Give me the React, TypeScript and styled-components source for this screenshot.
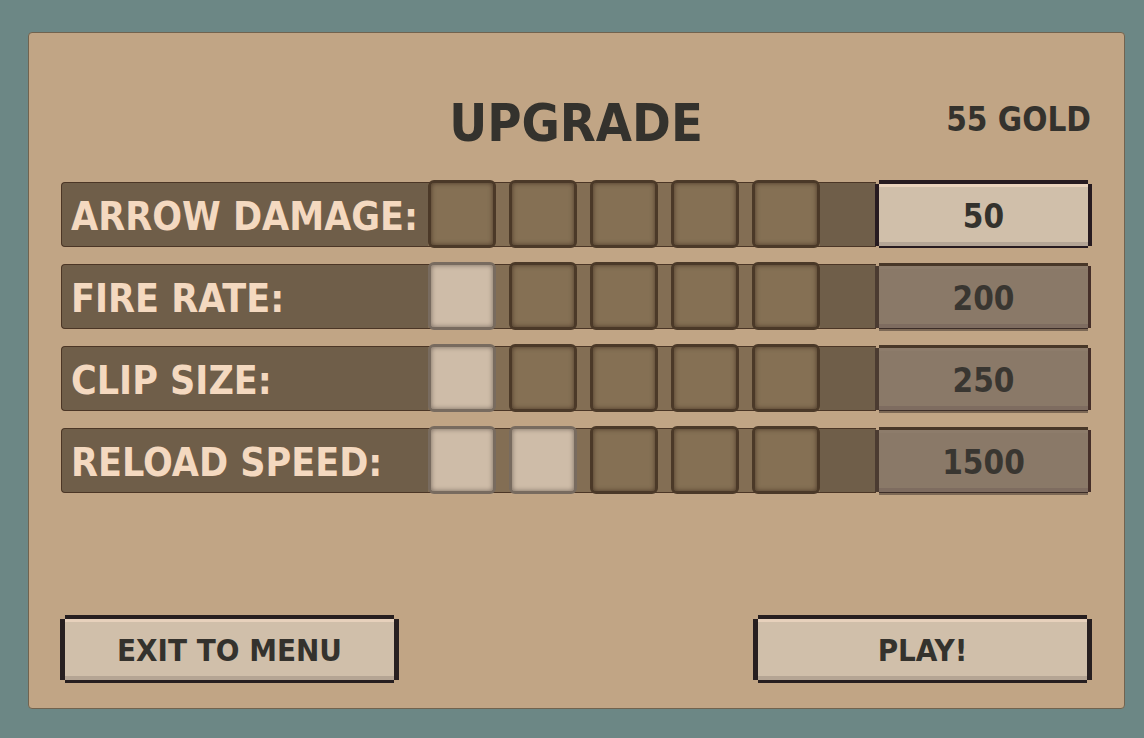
import React from "react";
import styled, { createGlobalStyle } from "styled-components";

const GlobalStyle = createGlobalStyle`
  *, *::before, *::after { box-sizing: border-box; }
  body {
    margin: 0;
    background: #6c8785;
    color: #34322d;
    font-family: "DejaVu Sans Condensed", "DejaVu Sans", sans-serif;
    font-weight: 700;
  }
`;

const Page = styled.div`
  display: flex;
  min-height: 100vh;
  padding: 32px 19px 29px 28px;
`;

const Panel = styled.main`
  flex: 1;
  display: flex;
  flex-direction: column;
  padding: 54px 33px 28px 32px;
  background: #c1a585;
  border: 1px solid #71634f;
  border-radius: 4px;
`;

const Header = styled.header`
  display: grid;
  grid-template-columns: 1fr auto 1fr;
  align-items: start;
  margin-bottom: 21px;
`;

const Title = styled.h1`
  grid-column: 2;
  margin: 0;
  font-size: 52px;
  line-height: 72px;
`;

const Gold = styled.div`
  justify-self: end;
  font-size: 33px;
  line-height: 66px;
  white-space: nowrap;
`;

const Upgrades = styled.ul`
  display: flex;
  flex-direction: column;
  gap: 14px;
  margin: 0;
  padding: 0;
  list-style: none;
`;

const Row = styled.li`
  display: flex;
  height: 68px;
`;

const Bar = styled.div`
  flex: 1;
  display: flex;
  margin: 2px 0 1px;
  padding-right: 56px;
  background: #6f5e49;
  border: solid #4b3626;
  border-width: 1px 0 1px 1px;
  border-radius: 4px 0 0 4px;
`;

const Label = styled.div`
  flex: 1;
  padding: 4px 0 0 9px;
  color: #f4d9c0;
  font-size: 39px;
  line-height: 60px;
  white-space: nowrap;
`;

const Slots = styled.div`
  display: flex;
  gap: 13px;
  background: #836e54;
`;

const Slot = styled.div<{ $filled: boolean }>`
  width: 68px;
  height: 68px;
  margin-top: -3px;
  border: 3px solid ${(p) => (p.$filled ? "#786b5f" : "#4b3928")};
  border-radius: 6px;
  background: ${(p) => (p.$filled ? "#cebca8" : "#857054")};
  box-shadow: inset 0 0 5px ${(p) => (p.$filled ? "#786b5f" : "#4b3928")};
`;

const Button = styled.button`
  border: 0;
  border-radius: 0;
  padding: 0;
  background: #d0bfaa;
  color: inherit;
  font-family: inherit;
  font-weight: inherit;
  cursor: pointer;
  white-space: nowrap;
`;

const CostButton = styled(Button)`
  width: 209px;
  margin: 4px 3px 2px;
  padding-top: 4px;
  font-size: 33px;
  line-height: 58px;
  box-shadow: 0 -4px #271b20, 0 2px #271b20, -4px 0 #271b20, 4px 0 #271b20,
    inset 0 3px #ead3bc, inset 0 -4px #b4a596;

  &:disabled {
    background: #8a7968;
    color: #393631;
    cursor: default;
    box-shadow: 0 -3px #483728, 0 1px #3c2d28, 0 3px #7c6855,
      -4px 0 #4b3b31, 3px 0 #452f29,
      inset 0 3px #8d7c6b, inset 0 -4px #7e6c60;
  }
`;

const Footer = styled.footer`
  display: flex;
  justify-content: space-between;
  margin-top: auto;
  padding: 24px 4px 0;
`;

const MenuButton = styled(Button)`
  width: 329px;
  height: 61px;
  font-size: 31px;
  box-shadow: 0 -4px #271f20, 0 3px #271f20, -5px 0 #271f20, 5px 0 #271f20,
    inset 0 3px #e7d1bc, inset 0 -4px #b5a594;
`;

const gold = 55;
const slotCount = 5;
const upgrades = [
  { name: "ARROW DAMAGE", level: 0, cost: 50 },
  { name: "FIRE RATE", level: 1, cost: 200 },
  { name: "CLIP SIZE", level: 1, cost: 250 },
  { name: "RELOAD SPEED", level: 2, cost: 1500 },
];

export default function App() {
  return (
    <>
      <GlobalStyle />
      <Page>
        <Panel>
          <Header>
            <Title>UPGRADE</Title>
            <Gold>{gold} GOLD</Gold>
          </Header>
          <Upgrades>
            {upgrades.map(({ name, level, cost }) => (
              <Row key={name}>
                <Bar>
                  <Label>{name}:</Label>
                  <Slots>
                    {Array.from({ length: slotCount }, (_, i) => (
                      <Slot key={i} $filled={i < level} />
                    ))}
                  </Slots>
                </Bar>
                <CostButton type="button" disabled={cost > gold}>
                  {cost}
                </CostButton>
              </Row>
            ))}
          </Upgrades>
          <Footer>
            <MenuButton type="button">EXIT TO MENU</MenuButton>
            <MenuButton type="button">PLAY!</MenuButton>
          </Footer>
        </Panel>
      </Page>
    </>
  );
}
